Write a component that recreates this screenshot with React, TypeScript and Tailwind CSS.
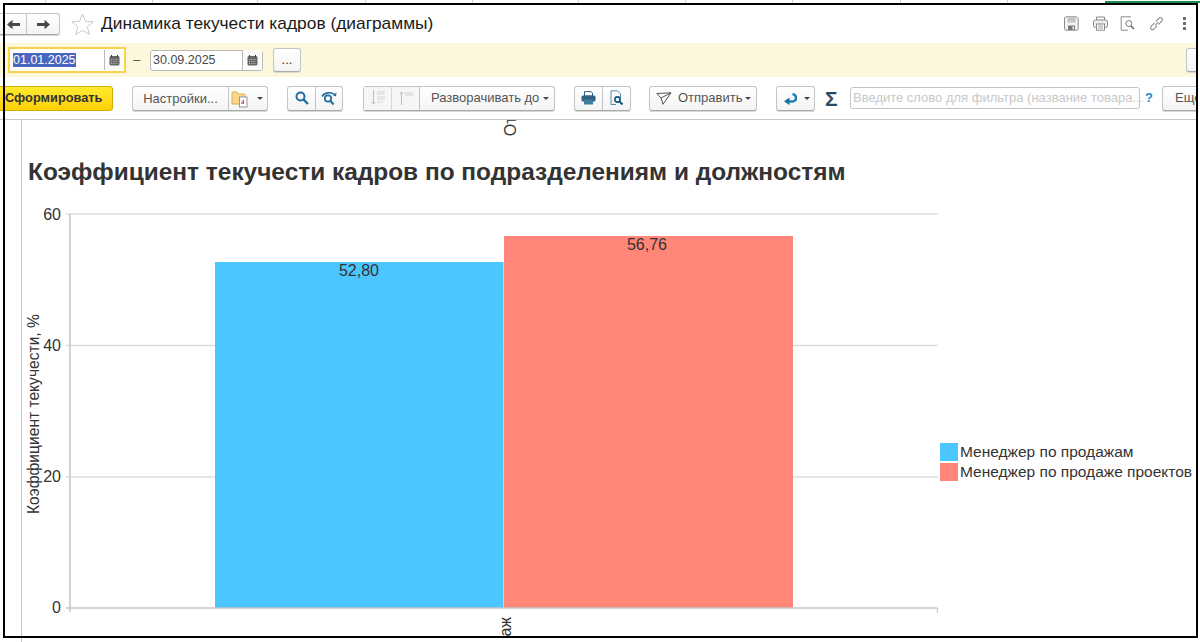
const cellLines = [45, 152, 257, 365, 472, 578, 685, 792, 900, 1007];

const Caret = () => <span className="ml-auto h-0 w-0 shrink-0 border-x-[3px] border-t-[3px] border-x-transparent border-t-[#444]" />;

const NavArrow = ({ right }: { right?: boolean }) => (
  <svg width="13" height="11" viewBox="0 0 13 11" className={right ? '' : 'rotate-180'}>
    <path d="M0 4h7.5V0.8L13 5.5 7.5 10.2V7H0z" fill="#4a4a4a" />
  </svg>
);

const CalendarIcon = () => (
  <svg width="11" height="11" viewBox="0 0 11 11">
    <rect x="0.5" y="1" width="10" height="9.5" rx="1.5" fill="#666" />
    <rect x="2" y="0" width="1" height="2" fill="#333" />
    <rect x="8" y="0" width="1" height="2" fill="#333" />
    <path d="M2 4.5h7M2 6.5h7M2 8.5h7" stroke="#ccc" strokeWidth="0.8" strokeDasharray="1 0.8" />
  </svg>
);

const SaveIcon = () => (
  <svg width="15" height="15" viewBox="0 0 15 15" className="shrink-0">
    <path d="M1.5 0.8h11l1.7 1.7v10.2a1.5 1.5 0 0 1-1.5 1.5H2a1.5 1.5 0 0 1-1.5-1.5V1.8z" fill="#f2f2f2" stroke="#8a8a8a" />
    <rect x="3.5" y="1.5" width="8" height="5" fill="#c4c4c4" />
    <rect x="4" y="9.5" width="7" height="4.5" fill="#777" />
    <rect x="8.5" y="10.5" width="1.5" height="3" fill="#eee" />
  </svg>
);

const TopPrintIcon = () => (
  <svg width="15" height="15" viewBox="0 0 15 15" fill="none" stroke="#8a8a8a" className="shrink-0">
    <path d="M3.5 4V1h8v3" />
    <rect x="0.5" y="4" width="14" height="7.5" rx="2" fill="#ededed" />
    <rect x="3.5" y="8" width="8" height="6.2" fill="#fff" />
    <path d="M5 10h5M5 12h5" stroke="#999" />
  </svg>
);

const TopPreviewIcon = () => (
  <svg width="15" height="15" viewBox="0 0 15 15" fill="none" stroke="#8a8a8a" className="-ml-[2px] shrink-0">
    <path d="M11 0.8H1.2v13.4H8" />
    <circle cx="8.8" cy="7.5" r="3" stroke="#777" />
    <path d="M11 10l3 3" stroke="#666" strokeWidth="1.6" />
  </svg>
);

const ChainIcon = () => (
  <svg width="15" height="15" viewBox="0 0 15 15" fill="none" stroke="#8f8f8f" strokeWidth="1.1" className="shrink-0">
    <path d="M6.2 9.4l3-3.2" />
    <path d="M5.5 6.8L2 10.4a2 2 0 0 0 2.8 2.8l3.4-3.4" />
    <path d="M9.5 8.4l3.5-3.6a2 2 0 0 0-2.8-2.8L6.8 5.4" />
  </svg>
);

const FolderIcon = () => (
  <svg width="18" height="19" viewBox="0 0 18 19" className="shrink-0">
    <path d="M1 4a1 1 0 0 1 1-1h4l1.5 2H13a1 1 0 0 1 1 1v9H1z" fill="#f8d98c" stroke="#e0ad4c" />
    <rect x="8.5" y="8" width="7.5" height="10" fill="#fff" stroke="#8a99a8" />
    <rect x="11.5" y="11" width="1.6" height="4" fill="#d9534f" />
    <rect x="10" y="13" width="1.4" height="2" fill="#7fa6c9" />
  </svg>
);

const SearchIcon = () => (
  <svg width="14" height="14" viewBox="0 0 14 14" fill="none" stroke="#1d6f9f" strokeWidth="2">
    <circle cx="5.5" cy="5.5" r="4" />
    <path d="M8.5 8.5l4.5 4.5" strokeWidth="2.4" />
  </svg>
);

const ResearchIcon = () => (
  <svg width="16" height="15" viewBox="0 0 16 15" fill="none" stroke="#1d6f9f">
    <path d="M1 5.5C3.5 1.5 10 0.5 13.5 3.5" strokeWidth="1.6" />
    <path d="M15.5 1.5l-0.5 4-3.2-1.2z" fill="#1d6f9f" stroke="none" />
    <circle cx="7" cy="7.5" r="3.2" strokeWidth="1.7" />
    <path d="M9.5 10l3 3.5" strokeWidth="2" />
  </svg>
);

const TreeIcon = ({ up }: { up?: boolean }) => (
  <svg width="16" height="18" viewBox="0 0 16 18" fill="none" stroke="#bcbcbc">
    {up ? <path d="M3.5 16V3M1.5 5l2-2 2 2" /> : <path d="M3.5 1v14M1.5 13l2 2 2-2" />}
    {up ? (
      <path d="M7 4h8M7 6h8" stroke="#cfcfcf" />
    ) : (
      <path d="M7 3h8M7 5h8M7 8h8M7 10h8M7 13h6" stroke="#d4d4d4" />
    )}
  </svg>
);

const PrintIcon = () => (
  <svg width="15" height="14" viewBox="0 0 15 14">
    <path d="M3.5 5V0.6h6.5L11.5 2v3z" fill="#fff" stroke="#2f6283" />
    <rect x="0.5" y="4.5" width="14" height="6" rx="1.5" fill="#2f6283" />
    <rect x="3" y="8.5" width="9" height="5" fill="#3f7da3" />
  </svg>
);

const PreviewIcon = () => (
  <svg width="14" height="16" viewBox="0 0 14 16" fill="none">
    <path d="M1 0.8h6.5L10.5 4v5M6 14.5H1z" stroke="#5a8aa8" />
    <path d="M1 0.8v13.7" stroke="#5a8aa8" />
    <circle cx="7.5" cy="9.5" r="2.6" stroke="#10587f" strokeWidth="1.6" />
    <path d="M9.5 11.5l3 3" stroke="#10587f" strokeWidth="2" />
  </svg>
);

const PlaneIcon = () => (
  <svg width="16" height="13" viewBox="0 0 16 13" fill="none" stroke="#555" className="ml-[6px] shrink-0">
    <path d="M0.8 1.5L15 0.8 7 12.3 5 6z" />
    <path d="M5 6l10-5.2" />
  </svg>
);

const ReturnIcon = () => (
  <svg width="13" height="13" viewBox="0 0 13 13" fill="none">
    <path d="M5 9.5h3.5a3 3 0 0 0 0-7.2" stroke="#1d7fb8" strokeWidth="2.6" />
    <path d="M0 9.3L5.5 5.5v7.6z" fill="#1d6f9f" />
  </svg>
);

const btn = 'flex shrink-0 items-center rounded-[3px] border border-[#c4c4c4] border-b-[#a9a9a9] bg-gradient-to-b from-white to-[#f4f4f4] shadow-[0_1px_0_#d8d8d8] whitespace-nowrap';

const DateField = ({ value, focused }: { value: string; focused?: boolean }) => (
  <div
    className={
      focused
        ? 'flex h-[26px] w-[118px] shrink-0 items-center border-2 border-[#f7d44c] bg-white text-[12.5px] text-[#4a4a4a]'
        : 'flex h-[21px] w-[113px] shrink-0 items-center rounded-[3px] border border-[#b9b9b9] bg-white text-[12.5px] text-[#4a4a4a]'
    }
  >
    <span className={focused ? 'flex-1 pl-[3px]' : 'flex-1 pl-[2px]'}>
      <span className={focused ? 'bg-[#4a66c0] text-white' : ''}>{value}</span>
    </span>
    <span className="flex h-[20px] w-[20px] shrink-0 items-center justify-center border-l border-[#b9b9b9] bg-[#fafafa]">
      <CalendarIcon />
    </span>
  </div>
);

export default function App() {
  return (
    <div className="relative flex h-[642px] w-[1200px] flex-col overflow-hidden bg-white font-['Liberation_Sans',Arial,sans-serif]">
      {/* spreadsheet behind the window */}
      <div className="relative h-[4px] shrink-0 overflow-hidden">
        {cellLines.map((x) => (
          <span key={x} className="absolute top-0 h-full w-px bg-[#cfcfcf]" style={{ left: x }} />
        ))}
        <span className="absolute right-0 top-[1px] h-[2px] w-[95px] bg-[#1e8a4c]" />
      </div>

      <div className="flex h-[633px] w-[1197px] shrink-0 flex-col overflow-hidden">
        {/* title */}
        <div className="flex h-[39px] shrink-0 items-center">
          <div className={`${btn} -ml-[4px] mt-[1px] h-[22px] w-[64px]`}>
            <span className="flex h-full w-[30px] items-center justify-center border-r border-[#c4c4c4] pl-[3px]">
              <NavArrow />
            </span>
            <span className="flex flex-1 justify-center">
              <NavArrow right />
            </span>
          </div>
          <svg width="23" height="22" viewBox="0 0 23 22" fill="none" stroke="#c5cbd0" className="ml-[11px] shrink-0">
            <path d="M11.5 1l3 7.3 7.8.5-6 5 2 7.7-6.8-4.2-6.8 4.2 2-7.7-6-5 7.8-.5z" />
          </svg>
          <h1 className="ml-[7px] whitespace-nowrap text-[17.35px] font-normal text-[#1a1a1a]">Динамика текучести кадров (диаграммы)</h1>
          <div className="ml-auto mr-[11px] flex items-center gap-[14px]">
            <SaveIcon />
            <TopPrintIcon />
            <TopPreviewIcon />
            <ChainIcon />
            <div className="ml-[5px] flex flex-col gap-[2px]">
              <span className="h-[3px] w-[3px] bg-[#707070]" />
              <span className="h-[3px] w-[3px] bg-[#707070]" />
              <span className="h-[3px] w-[3px] bg-[#707070]" />
            </div>
          </div>
        </div>

        {/* period bar */}
        <div className="flex h-[34px] shrink-0 items-center bg-[#fdf8dc] pl-[8px]">
          <DateField value="01.01.2025" focused />
          <span className="ml-[7px] w-[17px] shrink-0 text-[13px] text-[#555]">–</span>
          <DateField value="30.09.2025" />
          <div className={`${btn} ml-[10px] h-[24px] w-[28px] justify-center text-[13px] text-[#333]`}>...</div>
          <div className={`${btn} ml-auto -mr-[3px] h-[24px] w-[14px]`} />
        </div>

        {/* toolbar */}
        <div className="flex h-[43px] shrink-0 items-center border-b border-[#c8c8c8] text-[13px] text-[#555]">
          <div className="-ml-[2px] flex h-[25px] w-[115px] shrink-0 items-center rounded-[3px] border border-[#d0ae00] bg-gradient-to-b from-[#ffea2e] to-[#fdd000] pl-[6px] text-[12.8px] font-bold text-[#333]">
            Сформировать
          </div>
          <div className={`${btn} ml-[19px] h-[25px] w-[136px]`}>
            <span className="w-[96px] shrink-0 border-r border-[#c4c4c4] text-center leading-[23px]">Настройки...</span>
            <span className="ml-[2px]"><FolderIcon /></span>
            <Caret />
            <span className="w-[4px] shrink-0" />
          </div>
          <div className={`${btn} ml-[19px] h-[25px] w-[56px]`}>
            <span className="flex h-full w-[28px] items-center justify-center border-r border-[#c4c4c4]">
              <SearchIcon />
            </span>
            <span className="flex flex-1 justify-center"><ResearchIcon /></span>
          </div>
          <div className={`${btn} ml-[20px] h-[25px] w-[192px]`}>
            <span className="flex h-full w-[28px] shrink-0 items-center justify-center border-r border-[#d8d8d8] bg-[#f6f6f6]"><TreeIcon /></span>
            <span className="flex h-full w-[28px] shrink-0 items-center justify-center border-r border-[#c4c4c4] bg-[#f6f6f6]"><TreeIcon up /></span>
            <span className="pl-[11px]">Разворачивать до</span>
            <Caret />
            <span className="w-[5px] shrink-0" />
          </div>
          <div className={`${btn} ml-[19px] h-[25px] w-[57px]`}>
            <span className="flex h-full w-[28px] items-center justify-center border-r border-[#c4c4c4]">
              <PrintIcon />
            </span>
            <span className="flex flex-1 justify-center"><PreviewIcon /></span>
          </div>
          <div className={`${btn} ml-[18px] h-[25px] w-[108px]`}>
            <PlaneIcon />
            <span className="pl-[6px]">Отправить</span>
            <Caret />
            <span className="w-[5px] shrink-0" />
          </div>
          <div className={`${btn} ml-[19px] h-[25px] w-[39px]`}>
            <span className="flex h-full w-[26px] items-center justify-center">
              <ReturnIcon />
            </span>
            <Caret />
            <span className="w-[4px] shrink-0" />
          </div>
          <span className="ml-[10px] w-[14px] shrink-0 text-[21px] font-bold leading-none text-[#2d4a5c]">Σ</span>
          <div className="ml-[11px] flex h-[22px] w-[290px] shrink-0 items-center whitespace-nowrap rounded-[3px] border border-[#c4c4c4] bg-white pl-[2px] text-[13px] text-[#c8c8c8]">
            Введите слово для фильтра (название товара...
          </div>
          <span className="ml-[5px] w-[8px] shrink-0 text-center text-[13px] font-bold text-[#1e8ac8]">?</span>
          <div className={`${btn} ml-[9px] h-[25px] w-[50px] pl-[12px]`}>Еще</div>
        </div>

        {/* report */}
        <div className="relative flex min-h-0 flex-1 flex-col">
          <div className="relative h-[16px] shrink-0 overflow-hidden">
            <span className="absolute bottom-0 left-[502px] rotate-180 whitespace-nowrap text-[16px] leading-[18px] text-[#333] [writing-mode:vertical-rl]">Отдел</span>
          </div>
          <h2 className="ml-[28px] mt-[18px] h-[42px] shrink-0 whitespace-nowrap text-[24.43px] font-bold leading-[35px] text-[#333]">
            Коэффициент текучести кадров по подразделениям и должностям
          </h2>
          <div className="flex min-h-0 flex-1">
            <svg width="938" height="440" viewBox="0 196 938 440" className="shrink-0">
              {[214, 345.5, 477].map((y) => (
                <line key={y} x1="66" x2="938" y1={y} y2={y} stroke="#dedede" strokeWidth="1.3" />
              ))}
              <rect x="215" y="262" width="288.5" height="346" fill="#4bc6ff" />
              <rect x="504" y="236" width="289" height="372" fill="#ff8679" />
              <line x1="70" x2="70" y1="214" y2="612" stroke="#c4c4c4" strokeWidth="1.5" />
              <line x1="66" x2="937" y1="608" y2="608" stroke="#c4c4c4" strokeWidth="1.5" />
              <line x1="937.5" x2="937.5" y1="608" y2="613" stroke="#c4c4c4" />
              <g fill="#333" fontSize="16" textAnchor="end">
                <text x="61" y="220">60</text>
                <text x="61" y="351">40</text>
                <text x="61" y="482">20</text>
                <text x="61" y="613">0</text>
              </g>
              <text transform="translate(39 514) rotate(-90)" fontSize="15.6" fill="#333">Коэффициент текучести, %</text>
              <text x="359" y="276" fontSize="16" fill="#333" textAnchor="middle">52,80</text>
              <text x="647" y="250" fontSize="16" fill="#333" textAnchor="middle">56,76</text>
              <text transform="translate(511 617) rotate(-90)" fontSize="16" fill="#333" textAnchor="end">Отдел продаж</text>
            </svg>
            <div className="ml-[2px] mt-[247px] flex flex-col gap-[2px] text-[15.5px] leading-[18px] text-[#333]">
              <div className="flex items-center gap-[2px] whitespace-nowrap">
                <span className="h-[18px] w-[18px] shrink-0 bg-[#4bc6ff]" />
                Менеджер по продажам
              </div>
              <div className="flex items-center gap-[2px] whitespace-nowrap">
                <span className="h-[18px] w-[18px] shrink-0 bg-[#ff8679]" />
                Менеджер по продаже проектов
              </div>
            </div>
          </div>
        </div>
      </div>

      {/* vertical sheet line and the black frame over the capture */}
      <span className="absolute bottom-0 left-[21px] top-[120px] w-px bg-[#c4c4c4]" />
      <div className="pointer-events-none absolute left-[3px] top-[3px] h-[635px] w-[1195px] border-2 border-black" />
    </div>
  );
}
